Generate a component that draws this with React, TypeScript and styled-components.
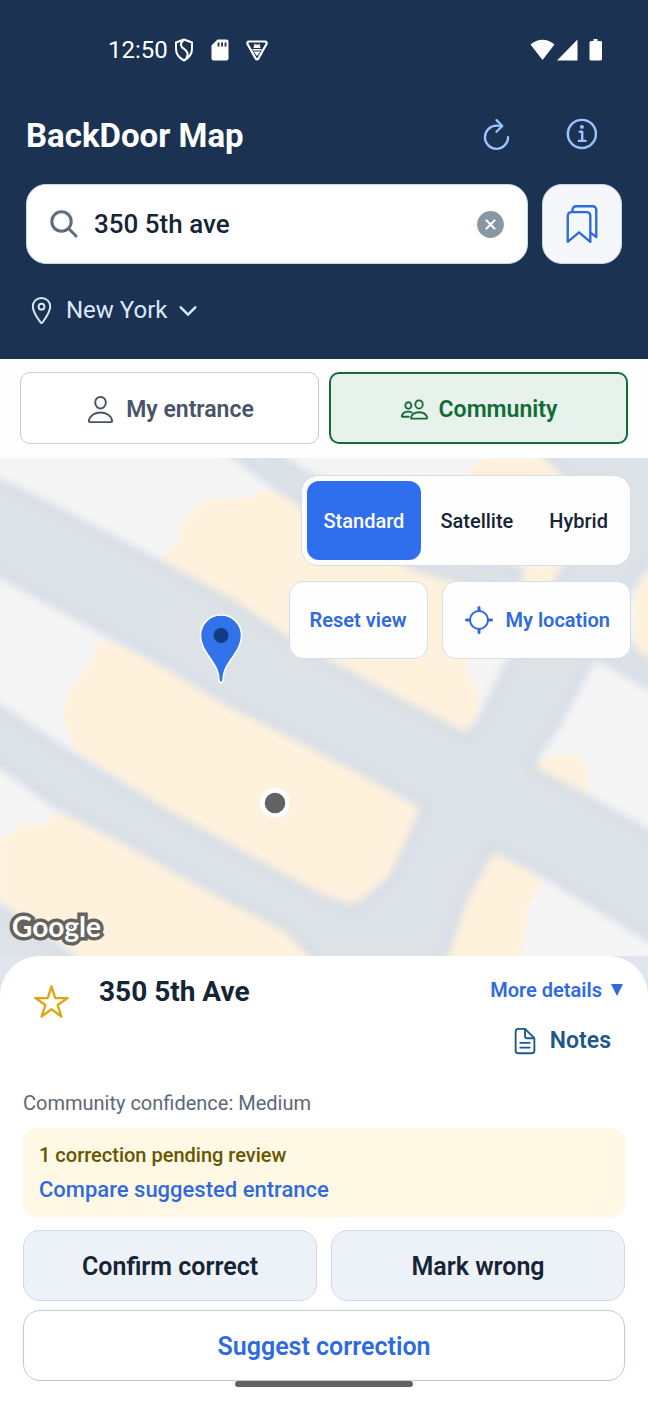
import React, { useState } from "react";
import styled, { createGlobalStyle } from "styled-components";
import {
  IoBookmarksOutline,
  IoChevronDown,
  IoCloseCircle,
  IoDocumentTextOutline,
  IoInformationCircleOutline,
  IoLocateOutline,
  IoLocationOutline,
  IoPeopleOutline,
  IoPersonOutline,
  IoRefreshOutline,
  IoStarOutline,
} from "react-icons/io5";

const color = {
  navy: "#1b3252",
  ink: "#152536",
  blue: "#2f6fed",
  link: "#2f6bdc",
  sky: "#9cc3ff",
  pale: "#dce8fa",
  green: "#146c35",
  slate: "#475369",
  muted: "#5d6876",
};

const GlobalStyle = createGlobalStyle`
  *, *::before, *::after { box-sizing: border-box; }
  body {
    margin: 0;
    background: #fefefe;
    color: ${color.ink};
    font-family: Roboto, "Liberation Sans", sans-serif;
  }
  button, input { font: inherit; }
  button { cursor: pointer; }
  svg { display: block; flex: none; }
`;

const Screen = styled.div`
  display: flex;
  flex-direction: column;
  min-height: 100vh;
`;

const Header = styled.header`
  background: ${color.navy};
  color: #fff;
  padding: 0 26px 29px;
`;

const StatusBar = styled.div`
  display: flex;
  align-items: center;
  height: 100px;
  padding: 0 18px 0 82px;
`;

const Clock = styled.time`
  font-size: 24px;
  line-height: 28px;
`;

const StatusIcons = styled.div<{ $gap: number; $end?: boolean }>`
  display: flex;
  align-items: center;
  gap: ${(p) => p.$gap}px;
  margin-left: ${(p) => (p.$end ? "auto" : "6px")};
`;

const TitleRow = styled.div`
  display: flex;
  align-items: center;
  justify-content: space-between;
  height: 72px;
`;

const AppTitle = styled.h1`
  margin: 0;
  font-size: 33px;
  line-height: 40px;
  font-weight: 700;
`;

const HeaderActions = styled.div`
  display: flex;
  align-items: center;
  gap: 48px;
  padding: 0 20px 4px 0;
`;

const IconButton = styled.button<{ $color: string }>`
  display: grid;
  place-items: center;
  padding: 0;
  border: 0;
  background: none;
  color: ${(p) => p.$color};
`;

const SearchRow = styled.div`
  display: flex;
  gap: 14px;
  margin-top: 12px;
`;

const SearchBox = styled.label`
  display: flex;
  flex: 1;
  align-items: center;
  min-width: 0;
  height: 80px;
  padding: 0 20px 0 23px;
  border: 1px solid #c9d6ea;
  border-radius: 20px;
  background: #fff;
  color: #5f6e7d;
`;

const SearchInput = styled.input`
  flex: 1;
  min-width: 0;
  margin-left: 16px;
  padding: 0;
  border: 0;
  outline: 0;
  background: none;
  color: ${color.ink};
  font-size: 26px;
  font-weight: 500;
`;

const SavedButton = styled.button`
  display: grid;
  place-items: center;
  width: 80px;
  height: 80px;
  padding: 0;
  border: 1px solid #c9d6ea;
  border-radius: 20px;
  background: #f5f7fa;
  color: ${color.link};
`;

const CityButton = styled.button`
  display: flex;
  align-items: center;
  margin-top: 27px;
  padding: 0;
  border: 0;
  background: none;
  color: ${color.pale};
  font-size: 24px;
  line-height: 39px;
`;

const CityName = styled.span`
  margin: 0 8px 0 9px;
`;

const Tabs = styled.div`
  display: grid;
  grid-template-columns: 1fr 1fr;
  gap: 10px;
  padding: 13px 20px 14px;
`;

const Tab = styled.button<{ $active: boolean }>`
  display: flex;
  align-items: center;
  justify-content: center;
  gap: 10px;
  height: 72px;
  padding: 2px 0 0;
  border: ${(p) => (p.$active ? `2px solid ${color.green}` : "1px solid #c3cdd3")};
  border-radius: 10px;
  background: ${(p) => (p.$active ? "#e7f2ec" : "#fff")};
  color: ${(p) => (p.$active ? color.green : color.slate)};
  font-size: 23px;
  font-weight: 600;
`;

const MapArea = styled.section`
  position: relative;
  height: 498px;
  overflow: hidden;
`;

const MapDrawing = styled.svg`
  width: 100%;
  height: 100%;
`;

const MapControls = styled.div`
  position: absolute;
  top: 17px;
  right: 17px;
  display: flex;
  flex-direction: column;
  align-items: flex-end;
  gap: 15px;
`;

const Segments = styled.div`
  display: flex;
  gap: 2px;
  padding: 5px;
  border: 1px solid #d5dde8;
  border-radius: 17px;
  background: #fefefe;
`;

const Segment = styled.button<{ $active: boolean }>`
  height: 79px;
  padding: 0 17px;
  border: 0;
  border-radius: 12px;
  background: ${(p) => (p.$active ? color.blue : "transparent")};
  color: ${(p) => (p.$active ? "#fff" : color.ink)};
  font-size: 20px;
  font-weight: 500;
`;

const MapActions = styled.div`
  display: flex;
  gap: 14px;
`;

const MapAction = styled.button`
  display: flex;
  align-items: center;
  gap: 11px;
  height: 78px;
  padding: 0 20px;
  border: 1px solid #d5dde8;
  border-radius: 14px;
  background: #fefefe;
  color: ${color.link};
  font-size: 20px;
  font-weight: 600;
`;

const MapCredit = styled.span`
  position: absolute;
  left: 12px;
  bottom: 12px;
  color: #fff;
  font-family: Lato, sans-serif;
  font-size: 28px;
  font-weight: 700;
  line-height: 36px;
  -webkit-text-stroke: 7px #66625c;
  paint-order: stroke fill;
  stroke-linejoin: round;
`;

const SheetBackdrop = styled.div`
  display: flex;
  flex: 1;
  background: #e1e6ee;
`;

const Sheet = styled.section`
  flex: 1;
  padding: 16px 23px;
  border-radius: 40px 40px 0 0;
  background: #fff;
`;

const PlaceRow = styled.div`
  display: flex;
  align-items: flex-start;
`;

const FavoriteButton = styled(IconButton)`
  margin: 11px 29px 0 10px;
`;

const PlaceName = styled.h2`
  flex: 1;
  margin: 0;
  font-size: 28px;
  font-weight: 700;
  line-height: 40px;
`;

const PlaceLinks = styled.div`
  display: flex;
  flex-direction: column;
  align-items: flex-end;
  gap: 13px;
`;

const MoreButton = styled.button`
  display: flex;
  align-items: center;
  gap: 9px;
  padding: 0 2px 0 0;
  border: 0;
  background: none;
  color: ${color.link};
  font-size: 20px;
  font-weight: 600;
  line-height: 36px;
`;

const NotesButton = styled.button`
  display: flex;
  align-items: center;
  gap: 10px;
  padding: 0 14px 0 0;
  border: 0;
  background: none;
  color: #1f5788;
  font-size: 23px;
  font-weight: 600;
  line-height: 40px;
`;

const Confidence = styled.p`
  margin: 29px 0 12px;
  color: ${color.muted};
  font-size: 20px;
  line-height: 26px;
`;

const PendingCard = styled.div`
  display: flex;
  flex-direction: column;
  align-items: flex-start;
  padding: 10px 16px;
  border-radius: 14px;
  background: #fef8e5;
`;

const PendingTitle = styled.strong`
  color: #675600;
  font-size: 20px;
  font-weight: 500;
  line-height: 34px;
`;

const PendingLink = styled.a`
  color: ${color.link};
  font-size: 22px;
  font-weight: 500;
  line-height: 35px;
  text-decoration: none;
`;

const ReviewActions = styled.div`
  display: grid;
  grid-template-columns: 1fr 1fr;
  gap: 9px 14px;
  margin-top: 13px;
`;

const ReviewButton = styled.button<{ $wide?: boolean }>`
  grid-column: ${(p) => (p.$wide ? "1 / -1" : "auto")};
  height: 71px;
  padding: 2px 0 0;
  border: 1px solid ${(p) => (p.$wide ? "#bfcad8" : "#cfd9e6")};
  border-radius: 17px;
  background: ${(p) => (p.$wide ? "#fff" : "#edf1f8")};
  color: ${(p) => (p.$wide ? color.link : color.ink)};
  font-size: 25px;
  font-weight: 600;
`;

const HomeIndicator = styled.div`
  width: 178px;
  height: 6px;
  margin: 0 auto;
  border-radius: 3px;
  background: #626262;
`;

function ShieldIcon() {
  return (
    <svg width="20" height="24" viewBox="0 0 20 24" fill="none" stroke="#fff" strokeWidth="2" strokeLinejoin="round" strokeLinecap="round">
      <path d="M10 1.500 18 4.500V11C18 16 14.800 20 10 22.500C5.200 20 2 16 2 11V4.500Z" />
      <path d="M9.500 2C5.500 6 6.500 8.500 10 10.800C14 13.500 15 16 12.500 20" />
    </svg>
  );
}

function SdCardIcon() {
  return (
    <svg width="18" height="22" viewBox="0 0 18 22">
      <path d="M6.500 0.500H15.500A2 2 0 0 1 17.500 2.500V19.500A2 2 0 0 1 15.500 21.500H2.500A2 2 0 0 1 .5 19.500V6.500Z" fill="#fff" />
      <path d="M7.500 3.500V7.500M11 3.500V7.500M14.500 3.500V7.500" stroke={color.navy} strokeWidth="1.800" />
    </svg>
  );
}

function BugTriangleIcon() {
  return (
    <svg width="22" height="21" viewBox="0 0 22 21">
      <path d="M3 1.500H19A1.700 1.700 0 0 1 20.500 4L12.300 18.600A1.500 1.500 0 0 1 9.700 18.600L1.500 4A1.700 1.700 0 0 1 3 1.500Z" fill="none" stroke="#fff" strokeWidth="2.200" />
      <path d="M7.500 8A3.500 3.500 0 0 1 14.500 8ZM6.500 9H15.500V10.500H6.500ZM7.500 11.500H14.500L11 16Z" fill="#fff" />
      <path d="M8.300 4 9.500 5.500M13.700 4 12.500 5.500" stroke="#fff" strokeWidth="1.200" />
    </svg>
  );
}

function SignalIcons() {
  return (
    <svg width="74" height="22" viewBox="0 0 74 22" fill="#fff">
      <path d="M0.500 5.500C7.500-.8 17.500-.8 24.500 5.500L12.500 21Z" />
      <path d="M27 21.500H47.500V.5Z" />
      <path d="M63.500 0H67.500V2H71A1.500 1.500 0 0 1 72 3.500V20A1.500 1.500 0 0 1 70.500 21.500H61A1.500 1.500 0 0 1 59.500 20V3.500A1.500 1.500 0 0 1 61 2H63.500Z" />
    </svg>
  );
}

function SearchIcon() {
  return (
    <svg width="28" height="28" viewBox="0 0 28 28" fill="none" stroke="currentColor" strokeWidth="3" strokeLinecap="round">
      <circle cx="11.500" cy="11.500" r="9.700" />
      <path d="M18.800 18.800 26 26" />
    </svg>
  );
}

const blocks = [
  "M264 31 248 40 207 41 182 65 178 85 157 105 231 148 289 188 397 246 472 284 479 238 467 211 470 190 520 160 555 121 566 108 500 112 488 123 413 104 302 41Z",
  "M99 183 85 212 70 232 62 258 74 291 165 355 248 401 322 441 355 457 393 421 426 351 372 318 310 285 231 245 115 183Z",
  "M0 381 25 366 48 367 54 354 75 358 124 381 207 428 289 471 335 500 83 500 0 446Z",
  "M530 304 552 298 578 296 588 318 585 342 560 336 537 322Z",
  "M489 389 520 404 543 422 529 448 520 500 440 500 463 441Z",
  "M467 13 487 -4 541 -4 570 16 540 40 480 40Z",
  "M634 140 652 90 652 212 636 205Z",
];

const roads = [
  "M-10 20 54 51 157 105 231 145 289 185 397 243 467 280 480 265 512 201 566 111 590 40 541 -10H660V88L628 131 591 201 554 271 531 302 537 315 587 341 660 382V486L537 411 492 388 463 441 440 510H325L289 471 207 428 124 381 54 345-10 298V244L50 285 83 305 165 355 248 401 322 441 355 452 393 421 426 348 372 318 310 285 231 245 165 205 83 161-10 110Z",
  "M225 -10 269 22 302 45 413 108 512 138 520 112 488 107 400 60 302 15 265 -10Z",
  "M585 196 595 196 660 234V210L634 196 610 160Z",
  "M-10 444 40 476 83 510H-10Z",
];

function StreetMap() {
  return (
    <MapDrawing viewBox="0 0 648 498" preserveAspectRatio="xMidYMid slice" role="img" aria-label="Street map around 350 5th Ave">
      <defs>
        <filter id="soft" x="-5%" y="-5%" width="110%" height="110%">
          <feGaussianBlur stdDeviation="5" />
        </filter>
        <filter id="crisp" x="-5%" y="-5%" width="110%" height="110%">
          <feGaussianBlur stdDeviation="1.500" />
        </filter>
      </defs>
      <rect width="648" height="498" fill="#f5f5f5" />
      <g filter="url(#crisp)" fill="#fff2dd">
        {blocks.map((d) => (
          <path key={d} d={d} />
        ))}
      </g>
      <g filter="url(#soft)" fill="#dde2e6" stroke="#d2dae6" strokeWidth="7" strokeLinejoin="round">
        {roads.map((d) => (
          <path key={d} d={d} />
        ))}
      </g>
      <path
        d="M221 157C209 157 200.500 166.500 200.500 177.500C200.500 187 206 194 211 201.500C216 209 219 214 219 222Q219 224.500 221 224.500T223 222C223 214 226 209 231 201.500C236 194 241.500 187 241.500 177.500C241.500 166.500 233 157 221 157Z"
        fill="#3273ea"
        stroke="#fff"
        strokeWidth="1.500"
      />
      <circle cx="221" cy="177.500" r="7.500" fill="#123a85" />
      <circle cx="275" cy="345" r="15" fill="#fff" />
      <circle cx="275" cy="345" r="10.300" fill="#626262" />
    </MapDrawing>
  );
}

const mapTypes = ["Standard", "Satellite", "Hybrid"];

export default function App() {
  const [query, setQuery] = useState("350 5th ave");
  const [tab, setTab] = useState("community");
  const [mapType, setMapType] = useState("Standard");

  return (
    <Screen>
      <GlobalStyle />
      <Header>
        <StatusBar>
          <Clock>12:50</Clock>
          <StatusIcons $gap={17}>
            <ShieldIcon />
            <SdCardIcon />
            <BugTriangleIcon />
          </StatusIcons>
          <StatusIcons $gap={0} $end>
            <SignalIcons />
          </StatusIcons>
        </StatusBar>
        <TitleRow>
          <AppTitle>BackDoor Map</AppTitle>
          <HeaderActions>
            <IconButton $color={color.sky} aria-label="Refresh">
              <IoRefreshOutline size={37} />
            </IconButton>
            <IconButton $color={color.sky} aria-label="Information">
              <IoInformationCircleOutline size={39} />
            </IconButton>
          </HeaderActions>
        </TitleRow>
        <SearchRow>
          <SearchBox>
            <SearchIcon />
            <SearchInput aria-label="Search address" value={query} onChange={(e) => setQuery(e.target.value)} />
            <IconButton $color="#8896a6" aria-label="Clear search" onClick={() => setQuery("")}>
              <IoCloseCircle size={33} />
            </IconButton>
          </SearchBox>
          <SavedButton aria-label="Saved places">
            <IoBookmarksOutline size={38} />
          </SavedButton>
        </SearchRow>
        <CityButton>
          <IoLocationOutline size={31} />
          <CityName>New York</CityName>
          <IoChevronDown size={26} />
        </CityButton>
      </Header>

      <Tabs>
        <Tab $active={tab === "mine"} onClick={() => setTab("mine")}>
          <IoPersonOutline size={31} />
          My entrance
        </Tab>
        <Tab $active={tab === "community"} onClick={() => setTab("community")}>
          <IoPeopleOutline size={29} />
          Community
        </Tab>
      </Tabs>

      <MapArea>
        <StreetMap />
        <MapControls>
          <Segments>
            {mapTypes.map((name) => (
              <Segment key={name} $active={mapType === name} onClick={() => setMapType(name)}>
                {name}
              </Segment>
            ))}
          </Segments>
          <MapActions>
            <MapAction>Reset view</MapAction>
            <MapAction>
              <IoLocateOutline size={32} />
              My location
            </MapAction>
          </MapActions>
        </MapControls>
        <MapCredit>Google</MapCredit>
      </MapArea>

      <SheetBackdrop>
        <Sheet>
          <PlaceRow>
            <FavoriteButton $color="#e0a512" aria-label="Add to favorites">
              <IoStarOutline size={37} />
            </FavoriteButton>
            <PlaceName>350 5th Ave</PlaceName>
            <PlaceLinks>
              <MoreButton>
                More details
                <svg width="12" height="12" viewBox="0 0 12 12" fill="currentColor">
                  <path d="M0 0H12L6 12Z" />
                </svg>
              </MoreButton>
              <NotesButton>
                <IoDocumentTextOutline size={30} />
                Notes
              </NotesButton>
            </PlaceLinks>
          </PlaceRow>
          <Confidence>Community confidence: Medium</Confidence>
          <PendingCard>
            <PendingTitle>1 correction pending review</PendingTitle>
            <PendingLink href="#compare">Compare suggested entrance</PendingLink>
          </PendingCard>
          <ReviewActions>
            <ReviewButton>Confirm correct</ReviewButton>
            <ReviewButton>Mark wrong</ReviewButton>
            <ReviewButton $wide>Suggest correction</ReviewButton>
          </ReviewActions>
          <HomeIndicator />
        </Sheet>
      </SheetBackdrop>
    </Screen>
  );
}
